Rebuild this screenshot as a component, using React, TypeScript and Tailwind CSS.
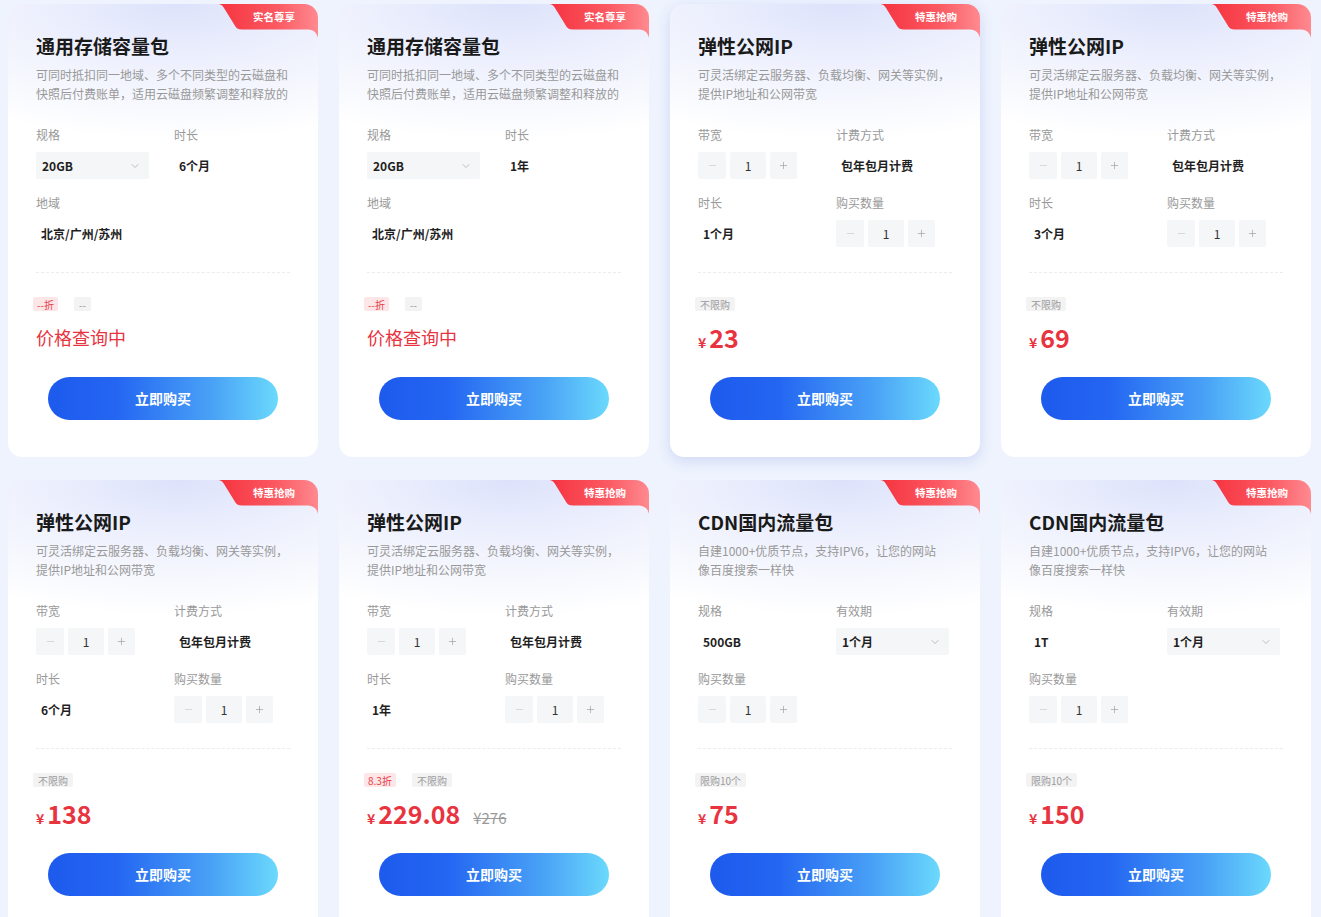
import { ChevronDown, Minus, Plus } from 'lucide-react';

type Field =
  | { label: string; kind: 'text'; value: string }
  | { label: string; kind: 'select'; value: string }
  | { label: string; kind: 'stepper'; value: string };

type Product = {
  title: string;
  desc: string[];
  badge: string;
  fields: Field[];
  tags: { text: string; red?: boolean }[];
  price?: string;
  original?: string;
  hovered?: boolean;
};

const storageDesc = ['可同时抵扣同一地域、多个不同类型的云磁盘和', '快照后付费账单，适用云磁盘频繁调整和释放的'];
const ipDesc = ['可灵活绑定云服务器、负载均衡、网关等实例，', '提供IP地址和公网带宽'];
const cdnDesc = ['自建1000+优质节点，支持IPV6，让您的网站', '像百度搜索一样快'];

const ipFields = (duration: string): Field[] => [
  { label: '带宽', kind: 'stepper', value: '1' },
  { label: '计费方式', kind: 'text', value: '包年包月计费' },
  { label: '时长', kind: 'text', value: duration },
  { label: '购买数量', kind: 'stepper', value: '1' },
];

const cdnFields = (size: string): Field[] => [
  { label: '规格', kind: 'text', value: size },
  { label: '有效期', kind: 'select', value: '1个月' },
  { label: '购买数量', kind: 'stepper', value: '1' },
];

const storageFields = (duration: string): Field[] => [
  { label: '规格', kind: 'select', value: '20GB' },
  { label: '时长', kind: 'text', value: duration },
  { label: '地域', kind: 'text', value: '北京/广州/苏州' },
];

const products: Product[] = [
  { title: '通用存储容量包', desc: storageDesc, badge: '实名尊享', fields: storageFields('6个月'), tags: [{ text: '--折', red: true }, { text: '--' }] },
  { title: '通用存储容量包', desc: storageDesc, badge: '实名尊享', fields: storageFields('1年'), tags: [{ text: '--折', red: true }, { text: '--' }] },
  { title: '弹性公网IP', desc: ipDesc, badge: '特惠抢购', fields: ipFields('1个月'), tags: [{ text: '不限购' }], price: '23', hovered: true },
  { title: '弹性公网IP', desc: ipDesc, badge: '特惠抢购', fields: ipFields('3个月'), tags: [{ text: '不限购' }], price: '69' },
  { title: '弹性公网IP', desc: ipDesc, badge: '特惠抢购', fields: ipFields('6个月'), tags: [{ text: '不限购' }], price: '138' },
  { title: '弹性公网IP', desc: ipDesc, badge: '特惠抢购', fields: ipFields('1年'), tags: [{ text: '8.3折', red: true }, { text: '不限购' }], price: '229.08', original: '276' },
  { title: 'CDN国内流量包', desc: cdnDesc, badge: '特惠抢购', fields: cdnFields('500GB'), tags: [{ text: '限购10个' }], price: '75' },
  { title: 'CDN国内流量包', desc: cdnDesc, badge: '特惠抢购', fields: cdnFields('1T'), tags: [{ text: '限购10个' }], price: '150' },
];

function Badge({ text }: { text: string }) {
  return (
    <div className="absolute right-0 top-0 h-[34px] w-[100px]">
      <svg width="100" height="34" viewBox="0 0 100 34" className="absolute inset-0">
        <defs>
          <linearGradient id="badgeRed" x1="0" y1="0" x2="1" y2="0">
            <stop offset="0" stopColor="#f5333f" />
            <stop offset="0.6" stopColor="#fb5a63" />
            <stop offset="1" stopColor="#ff8a90" />
          </linearGradient>
        </defs>
        <path
          d="M0 0 H100 V34 C99 29 96 26 90 25.5 H24 C20 25.5 18 24 16.5 21 L6 4 C4.5 1.5 2.5 0 0 0 Z"
          fill="url(#badgeRed)"
        />
      </svg>
      <span className="absolute left-[12px] right-0 top-0 flex h-[25px] items-center justify-center text-[10.5px] font-bold text-white">
        {text}
      </span>
    </div>
  );
}

function Control({ field }: { field: Field }) {
  if (field.kind === 'select') {
    return (
      <div className="flex h-[27px] w-[113px] items-center justify-between rounded-[2px] bg-[#f5f6f8] pl-[6px] pr-[8px]">
        <span className="text-[12px] font-bold text-[#1f1f1f]">{field.value}</span>
        <ChevronDown size={12} strokeWidth={1.5} className="text-[#aaa]" />
      </div>
    );
  }
  if (field.kind === 'stepper') {
    return (
      <div className="flex h-[27px] gap-[4px]">
        <div className="flex w-[28px] items-center justify-center rounded-[2px] bg-[#f5f6f8]">
          <Minus size={11} strokeWidth={1.4} className="text-[#c8c8c8]" />
        </div>
        <div className="flex w-[36px] items-center justify-center rounded-[2px] bg-[#f5f6f8] text-[12px] text-[#333]">
          {field.value}
        </div>
        <div className="flex w-[27px] items-center justify-center rounded-[2px] bg-[#f5f6f8]">
          <Plus size={11} strokeWidth={1.4} className="text-[#999]" />
        </div>
      </div>
    );
  }
  return (
    <div className="flex h-[27px] items-center pl-[5px] text-[12px] font-bold text-[#1f1f1f]">{field.value}</div>
  );
}

function ProductCard({ p }: { p: Product }) {
  return (
    <div
      className={`relative h-[453px] overflow-hidden rounded-[14px] bg-white bg-[radial-gradient(110%_30%_at_55%_0%,#dde2fb_0%,#eef1fd_45%,#ffffff_100%)] px-[28px] pt-[28px] ${
        p.hovered ? 'shadow-[0_4px_14px_rgba(70,100,210,0.18)]' : ''
      }`}
    >
      <Badge text={p.badge} />
      <h2 className="text-[19px] font-bold leading-[28px] text-[#1a1a1a]">{p.title}</h2>
      <div className="mt-[5px] text-[12px] leading-[19px] text-[#999]">
        {p.desc.map((line) => (
          <div key={line} className="whitespace-nowrap">
            {line}
          </div>
        ))}
      </div>

      <div className="mt-[23px] grid h-[121px] grid-cols-[138px_1fr] content-start gap-y-[15px]">
        {p.fields.map((f) => (
          <div key={f.label}>
            <div className="text-[12px] leading-[18px] text-[#999]">{f.label}</div>
            <div className="mt-[8px]">
              <Control field={f} />
            </div>
          </div>
        ))}
      </div>

      <div className="mt-[25px] border-t border-dashed border-[#ececec]" />

      <div className="-ml-[3px] mt-[24px] flex h-[14px] gap-[16px]">
        {p.tags.map((t) => (
          <span
            key={t.text}
            className={`flex h-[14px] items-center rounded-[2px] px-[4px] text-[10px] ${
              t.red ? 'bg-[#fde6e7] text-[#e8404a]' : 'bg-[#f3f3f4] px-[5px] text-[#9a9a9a]'
            }`}
          >
            {t.text}
          </span>
        ))}
      </div>

      <div className="mt-[10px] flex h-[32px] items-center">
        {p.price ? (
          <div className="flex items-baseline text-[#e8343f]">
            <span className="mr-[3px] text-[14px] font-bold">¥</span>
            <span className="text-[25px] font-bold leading-[32px]">{p.price}</span>
            {p.original && (
              <span className="ml-[13px] text-[15px] text-[#999] line-through">¥{p.original}</span>
            )}
          </div>
        ) : (
          <span className="text-[18px] leading-[32px] text-[#e8343f]">价格查询中</span>
        )}
      </div>

      <button className="mx-auto mt-[24px] flex h-[43px] w-[230px] items-center justify-center rounded-full bg-[linear-gradient(90deg,#1d5aed_0%,#2466f2_30%,#4aa3f6_72%,#6bd9fc_100%)] text-[14px] font-bold text-white">
        立即购买
      </button>
    </div>
  );
}

export default function App() {
  return (
    <div
      className="min-h-[917px] bg-[#eef3fd] pl-[8px] pt-[4px]"
      style={{ fontFamily: '"Noto Sans CJK SC", "Noto Sans", sans-serif' }}
    >
      <div className="grid grid-cols-[repeat(4,310px)] gap-x-[21px] gap-y-[23px]">
        {products.map((p, i) => (
          <ProductCard key={i} p={p} />
        ))}
      </div>
    </div>
  );
}
